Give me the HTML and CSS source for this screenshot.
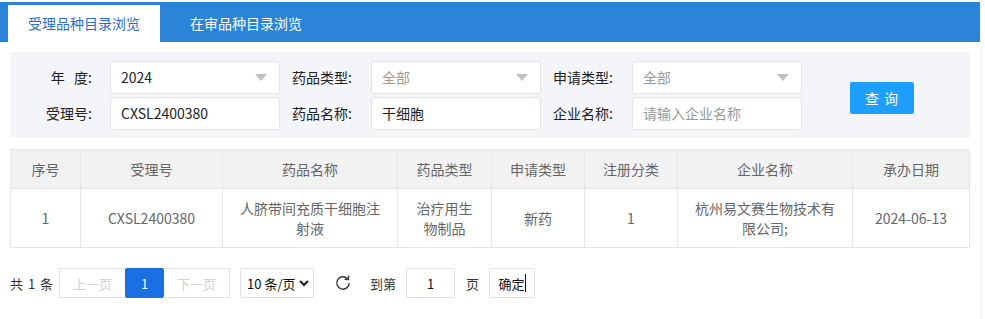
FILE: index.html
```html
<!DOCTYPE html>
<html lang="zh-CN">
<head>
    <meta charset="UTF-8">
    <title>受理品种目录浏览</title>
    <link rel="stylesheet" href="styles.css">
</head>
<body>
    <div class="page">
        <div class="tabs">
            <div class="tab active">受理品种目录浏览</div>
            <div class="tab">在审品种目录浏览</div>
        </div>

        <div class="filter">
            <div class="fields">
                <div class="row">
                    <label class="lbl">年&nbsp;&nbsp;&nbsp;度:</label>
                    <div class="sel"><span>2024</span><i class="caret"></i></div>
                    <label class="lbl">药品类型:</label>
                    <div class="sel muted"><span>全部</span><i class="caret"></i></div>
                    <label class="lbl">申请类型:</label>
                    <div class="sel muted"><span>全部</span><i class="caret"></i></div>
                </div>
                <div class="row">
                    <label class="lbl">受理号:</label>
                    <div class="inp">CXSL2400380</div>
                    <label class="lbl">药品名称:</label>
                    <div class="inp">干细胞</div>
                    <label class="lbl">企业名称:</label>
                    <div class="inp muted">请输入企业名称</div>
                </div>
            </div>
            <button class="btn-query">查 询</button>
        </div>

        <table class="grid">
            <thead>
                <tr>
                    <th class="c1">序号</th>
                    <th class="c2">受理号</th>
                    <th class="c3">药品名称</th>
                    <th class="c4">药品类型</th>
                    <th class="c5">申请类型</th>
                    <th class="c6">注册分类</th>
                    <th class="c7">企业名称</th>
                    <th>承办日期</th>
                </tr>
            </thead>
            <tbody>
                <tr>
                    <td>1</td>
                    <td>CXSL2400380</td>
                    <td>人脐带间充质干细胞注<br>射液</td>
                    <td>治疗用生<br>物制品</td>
                    <td>新药</td>
                    <td>1</td>
                    <td>杭州易文赛生物技术有<br>限公司;</td>
                    <td>2024-06-13</td>
                </tr>
            </tbody>
        </table>

        <div class="pager">
            <span class="count">共 1 条</span>
            <div class="pages">
                <span class="pg disabled">上一页</span>
                <span class="pg current">1</span>
                <span class="pg disabled">下一页</span>
            </div>
            <div class="size"><span>10 条/页</span>
                <svg width="12" height="12" viewBox="0 0 12 12"><path d="M2 4 L6 8 L10 4" fill="none" stroke="#222" stroke-width="2.2"/></svg>
            </div>
            <svg class="refresh" width="18" height="18" viewBox="0 0 18 18">
                <path d="M15.2 9 A6.2 6.2 0 1 1 13.4 4.6" fill="none" stroke="#333" stroke-width="1.4"/>
                <path d="M14.6 1.6 L14.4 5.4 L10.6 5.2" fill="none" stroke="#333" stroke-width="1.4"/>
            </svg>
            <span class="txt">到第</span>
            <div class="goto">1</div>
            <span class="txt">页</span>
            <div class="ok">确定<i class="cursor"></i></div>
        </div>
    </div>
</body>
</html>
```

FILE: styles.css
```css
body {
    margin: 0;
    padding: 0;
    background: #fff;
    font-family: "Noto Sans CJK SC", "Noto Sans", sans-serif;
    font-size: 14px;
    color: #333;
}

.page {
    width: 980px;
    padding-top: 2px;
    box-shadow: 1px 0 3px rgba(0, 0, 0, 0.08);
    min-height: 317px;
}

.tabs {
    background: #2b84d7;
    height: 37px;
    padding: 3px 0 0 8px;
    display: flex;
}

.tab {
    width: 152px;
    line-height: 37px;
    text-align: center;
    color: #fff;
    font-size: 14px;
}

.tab.active {
    background: #fff;
    color: #2b6fce;
}

.tab + .tab {
    width: 172px;
}

.filter {
    margin: 10px 10px 0 10px;
    width: 960px;
    height: 86px;
    background: #f4f5f9;
    display: flex;
    align-items: center;
}

.fields {
    display: flex;
    flex-direction: column;
    gap: 3px;
}

.row {
    display: flex;
    align-items: center;
}

.lbl {
    width: 91px;
    padding-right: 19px;
    text-align: right;
    color: #222;
    box-sizing: border-box;
}

.lbl:first-child {
    width: 100px;
    padding-right: 18px;
}

.sel,
.inp {
    width: 170px;
    height: 33px;
    box-sizing: border-box;
    background: #fff;
    border: 1px solid #e2e4e8;
    border-radius: 3px;
    padding: 0 10px;
    display: flex;
    align-items: center;
    justify-content: space-between;
    color: #222;
}

.muted {
    color: #999;
}

.caret {
    width: 0;
    height: 0;
    border-left: 6px solid transparent;
    border-right: 6px solid transparent;
    border-top: 7px solid #c0c0c0;
    margin-right: 2px;
}

.btn-query {
    margin: 5px 0 0 48px;
    width: 64px;
    height: 32px;
    background: #1e9fff;
    color: #fff;
    border: none;
    border-radius: 2px;
    font-family: inherit;
    font-size: 14px;
    letter-spacing: 1px;
}

.grid {
    margin: 11px 0 0 10px;
    width: 960px;
    table-layout: fixed;
    border-collapse: collapse;
    color: #666;
    font-size: 14px;
}

.grid th,
.grid td {
    border: 1px solid #e6e6e6;
    text-align: center;
    font-weight: normal;
    padding: 0;
    line-height: 20px;
}

.grid th {
    background: #f2f2f2;
    height: 38px;
}

.grid td {
    height: 58px;
    background: #fff;
}

.c1 { width: 69px; }
.c2 { width: 141px; }
.c3 { width: 174px; }
.c4 { width: 93px; }
.c5 { width: 92px; }
.c6 { width: 92px; }
.c7 { width: 174px; }

.pager {
    margin: 20px 0 0 10px;
    display: flex;
    align-items: center;
    height: 30px;
    color: #333;
    font-size: 13px;
    white-space: nowrap;
}

.count {
    margin-right: 6px;
    word-spacing: 2px;
}

.pages {
    display: flex;
    height: 30px;
    margin-right: 10px;
}

.pg {
    width: 66px;
    box-sizing: border-box;
    border: 1px solid #e2e2e2;
    display: flex;
    align-items: center;
    justify-content: center;
    background: #fff;
}

.pg.disabled {
    color: #d2d2d2;
}

.pg.current {
    width: 39px;
    background: #1a6fe3;
    border-color: #1a6fe3;
    color: #fff;
    border-radius: 2px;
}

.pg:first-child {
    border-right: none;
}

.pg:last-child {
    border-left: none;
}

.size {
    width: 74px;
    height: 30px;
    box-sizing: border-box;
    border: 1px solid #e2e2e2;
    border-radius: 2px;
    display: flex;
    align-items: center;
    justify-content: space-between;
    padding: 0 3px 0 6px;
    color: #111;
    font-size: 13px;
}

.refresh {
    margin: 0 18px 0 20px;
}

.txt {
    color: #333;
}

.goto {
    width: 49px;
    height: 30px;
    box-sizing: border-box;
    border: 1px solid #e2e2e2;
    border-radius: 2px;
    display: flex;
    align-items: center;
    justify-content: center;
    margin: 0 11px 0 10px;
    color: #111;
}

.ok {
    width: 46px;
    height: 30px;
    box-sizing: border-box;
    border: 1px solid #e2e2e2;
    border-radius: 2px;
    margin-left: 10px;
    display: flex;
    align-items: center;
    justify-content: center;
    color: #111;
}

.cursor {
    display: inline-block;
    width: 1px;
    height: 18px;
    background: #111;
}
```
